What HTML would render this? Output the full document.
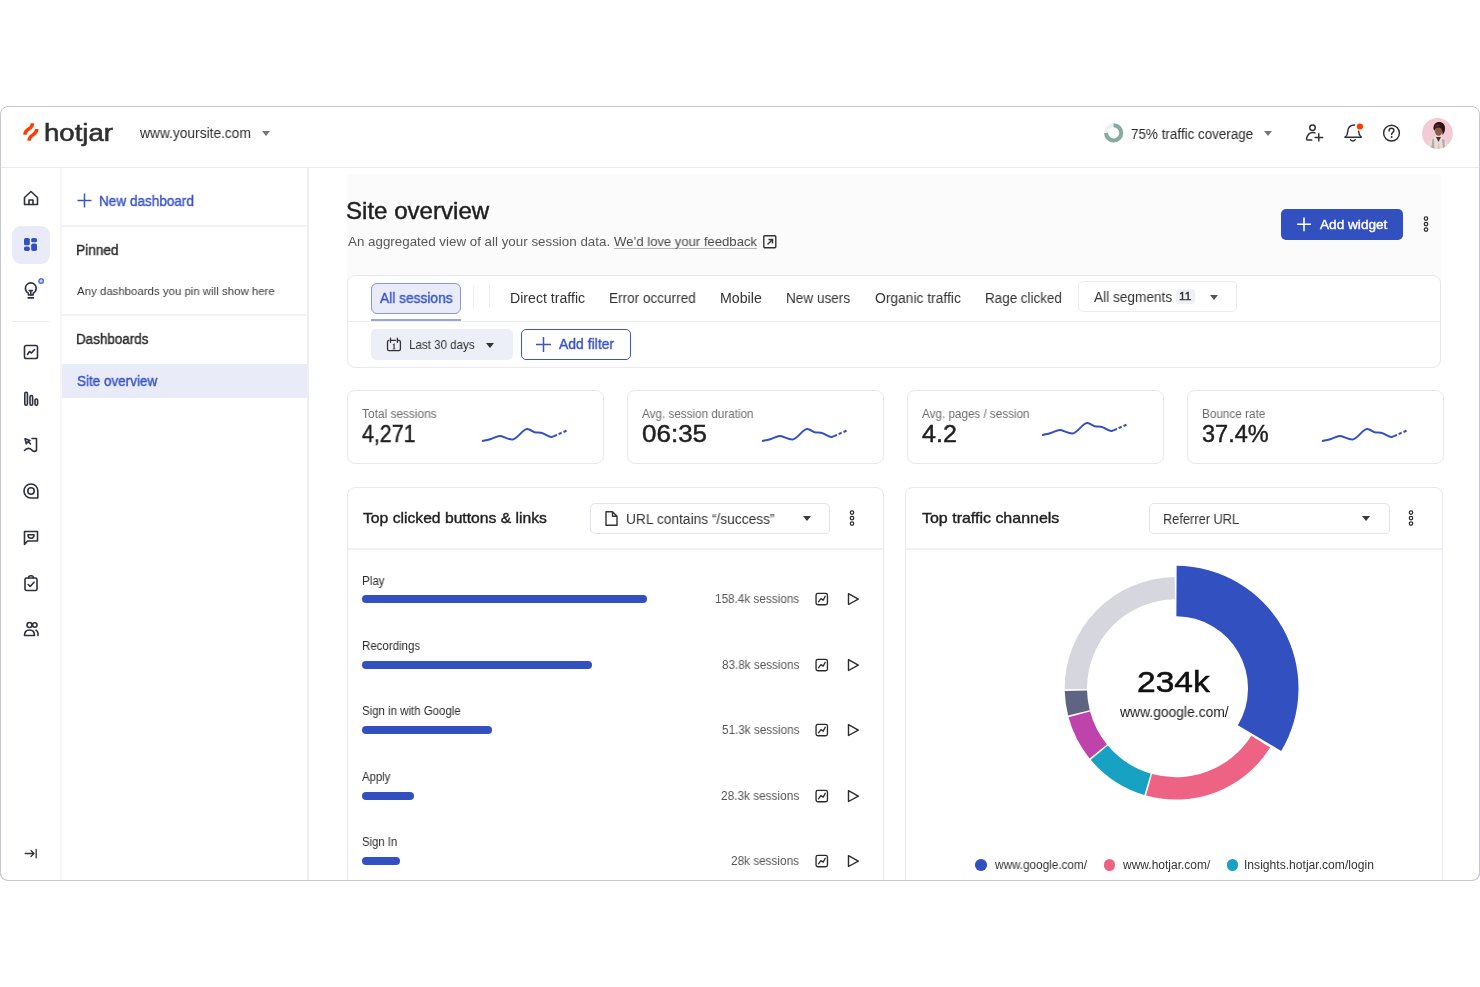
<!DOCTYPE html>
<html><head><meta charset="utf-8"><style>
html,body{margin:0;padding:0;background:#fff;width:1480px;height:987px;overflow:hidden;position:relative;font-family:"Liberation Sans",sans-serif}
.t{position:absolute;white-space:nowrap;line-height:1;will-change:transform}
.frame{position:absolute;left:0;top:106px;width:1478px;height:773px;border:1px solid #c6c8d2;border-radius:8px;background:#fff}
.caret{position:absolute;width:0;height:0;border-left:4.5px solid transparent;border-right:4.5px solid transparent;border-top:5.5px solid #777}
</style></head><body>
<div class="frame"></div><div style="position:absolute;left:1px;top:167px;width:1478px;height:1px;background:#e9e9ee"></div><div style="position:absolute;left:60px;top:168px;width:2px;height:712px;background:#f6f6f9"></div><div style="position:absolute;left:307px;top:168px;width:2px;height:712px;background:#efeff3"></div><svg style="position:absolute;left:18px;top:118px" width="26" height="28" viewBox="0 0 26 28">
<path d="M14.5 5.3 C14.5 12.3 6.9 9.8 6.9 16.8" stroke="#ff3c00" stroke-width="3.4" fill="none"/>
<path d="M18.8 11.1 C18.8 18.1 11 15.6 11 22.8" stroke="#ff3c00" stroke-width="3.4" fill="none"/>
</svg><div class="t" style="left:43.97px;top:121.40px;font-size:24.20px;color:#2f2f2f;letter-spacing:0.000px;transform:scaleX(1.1413);transform-origin:0 0;-webkit-text-stroke:0.55px #2f2f2f;">hotjar</div>
<div class="t" style="left:139.73px;top:126.04px;font-size:14.00px;color:#2b2b2b;letter-spacing:0.000px;transform:scaleX(0.9828);transform-origin:0 0;">www.yoursite.com</div>
<div class="caret" style="left:262px;top:131px"></div><svg style="position:absolute;left:1103px;top:123px" width="22" height="22" viewBox="0 0 22 22">
<circle cx="10.65" cy="9.9" r="7.6" stroke="#eeeff4" stroke-width="4" fill="none"/>
<path d="M10.65 2.3 A7.6 7.6 0 1 1 3.05 9.9" stroke="#86ada0" stroke-width="4" fill="none"/>
</svg><div class="t" style="left:1130.73px;top:126.54px;font-size:14.00px;color:#2b2b2b;letter-spacing:0.000px;transform:scaleX(0.9598);transform-origin:0 0;">75% traffic coverage</div>
<div class="caret" style="left:1264px;top:131px"></div><svg style="position:absolute;left:1290px;top:110px" width="120" height="45" viewBox="0 0 120 45">
<g stroke="#2f2f2f" stroke-width="1.45" fill="none" stroke-linecap="round" stroke-linejoin="round">
<circle cx="22.5" cy="17.8" r="2.75"/>
<path d="M21.8 30 H17.6 C16.7 30 16.3 29.3 16.6 28.2 C17.5 25 19.6 22.4 22.7 22.4 C23.6 22.4 24.4 22.6 25 22.9"/>
<path d="M28.8 23.6 V31.1 M25.1 27.4 H32.7"/>
<path d="M54.9 27.2 H71.3"/>
<path d="M55.4 27 C57.2 25.6 57.6 23.8 57.8 21.2 C58.1 17.2 60.6 15 64.6 15"/>
<path d="M68.6 21.2 C68.8 24 69.3 25.6 71 27"/>
<path d="M60.6 29.7 C61.3 31.4 64.4 31.4 65.1 29.7"/>
<circle cx="101.5" cy="23.1" r="7.9"/>
<path d="M99.1 20.9 C99.1 19.1 100.2 18.3 101.5 18.3 C102.9 18.3 103.9 19.2 103.9 20.5 C103.9 22.3 101.6 22.5 101.6 24.5"/>
</g>
<circle cx="101.6" cy="27.1" r="1" fill="#2f2f2f"/>
<circle cx="69.9" cy="16.5" r="3.1" fill="#ff3c00"/>
</svg><svg style="position:absolute;left:1422px;top:117.7px" width="31" height="31" viewBox="0 0 31 31">
<defs><clipPath id="av"><circle cx="15.4" cy="15.4" r="15.4"/></clipPath></defs>
<g clip-path="url(#av)">
<rect width="31" height="31" fill="#f4cad5"/>
<path d="M5 31 C6 22 9 19.5 13 19 L19 19 C23 19.5 25 22 26.5 31 Z" fill="#e6ddd8"/>
<path d="M9 31 L10.5 21 L12 20.5 L12.5 31 Z M21 31 L20 21 L22.5 21.5 L23 31Z" fill="#b9aaa6"/>
<path d="M14 19 L16.5 24 L19 19 Z" fill="#4a3028"/>
<path d="M15.5 31 L16.5 23 L18 31 Z" fill="#f2b8c2"/>
<ellipse cx="16.6" cy="13.2" rx="3.6" ry="4.6" fill="#8b5b46"/>
<path d="M11.5 11 C11 6.5 14 4 17 4 C20.5 4 23.5 6.5 23 11 C23 14 21.5 16 20.5 17 C20.5 13 20 10 17 9.5 C14.5 9.3 13 10.5 12.5 13 Z" fill="#2a1416"/>
<path d="M13 8.5 C14 6.5 17 6 19.5 7.3 C18 7.5 15 8 13 9.5 Z" fill="#7a1f35"/>
</g></svg><svg style="position:absolute;left:22px;top:189px" width="18" height="18" viewBox="0 0 18 18"><path d="M2.5 8.5 L9 2.5 L15.5 8.5 V15.5 H2.5 Z" stroke="#2e3240" stroke-width="1.6" fill="none" stroke-linecap="round" stroke-linejoin="round"/><path d="M7 15.5 V11 H11 V15.5" stroke="#2e3240" stroke-width="1.6" fill="none" stroke-linecap="round" stroke-linejoin="round"/></svg>
<div style="position:absolute;left:12px;top:226px;width:38px;height:38px;border-radius:9px;background:#e9ecf8"></div><svg style="position:absolute;left:23px;top:237px" width="16" height="16" viewBox="0 0 16 16"><rect x="1" y="1" width="5.8" height="7.3" rx="1.6" fill="#3350c0"/><rect x="1" y="9.6" width="5.8" height="4.3" rx="1.6" fill="#3350c0"/><rect x="8.2" y="1" width="5.8" height="4.3" rx="1.6" fill="#3350c0"/><rect x="8.2" y="6.6" width="5.8" height="7.3" rx="1.6" fill="#3350c0"/></svg>
<svg style="position:absolute;left:22px;top:276px" width="26" height="26" viewBox="0 0 26 26"><path d="M6.4 19 V17.2 C4.6 16.2 3.4 14.4 3.4 12.3 C3.4 9.3 5.8 6.9 8.8 6.9 C11.8 6.9 14.2 9.3 14.2 12.3 C14.2 14.4 13 16.2 11.2 17.2 V19 Z" stroke="#2e3240" stroke-width="1.6" fill="none" stroke-linecap="round" stroke-linejoin="round"/><path d="M7.2 14.6 H10.4 M8.8 14.6 V19 M6.2 21.9 H11.4" stroke="#2e3240" stroke-width="1.6" fill="none" stroke-linecap="round" stroke-linejoin="round"/><circle cx="19.1" cy="5" r="2.3" stroke="#4a66d4" stroke-width="1.3" fill="#c3cdf0"/></svg>
<div style="position:absolute;left:12px;top:321px;width:38px;height:1px;background:#ececf1"></div><svg style="position:absolute;left:22px;top:343px" width="18" height="18" viewBox="0 0 18 18"><rect x="2.5" y="2.5" width="13" height="13" rx="1.8" stroke="#2e3240" stroke-width="1.6" fill="none" stroke-linecap="round" stroke-linejoin="round"/><path d="M5.5 11.5 L7.5 8.5 L9.5 10 L12.5 6.5" stroke="#2e3240" stroke-width="1.6" fill="none" stroke-linecap="round" stroke-linejoin="round"/></svg>
<svg style="position:absolute;left:22px;top:390px" width="18" height="18" viewBox="0 0 18 18"><rect x="2.8" y="2.3" width="2.6" height="13" rx="1.2" stroke="#2e3240" stroke-width="1.6" fill="none" stroke-linecap="round" stroke-linejoin="round"/><rect x="8" y="5.5" width="2.6" height="9.8" rx="1.2" stroke="#2e3240" stroke-width="1.6" fill="none" stroke-linecap="round" stroke-linejoin="round"/><rect x="13" y="9" width="2.6" height="6.3" rx="1.2" stroke="#2e3240" stroke-width="1.6" fill="none" stroke-linecap="round" stroke-linejoin="round"/></svg>
<svg style="position:absolute;left:22px;top:436px" width="18" height="18" viewBox="0 0 18 18"><path d="M3 2.8 L8 4.5 L6.2 5.6 L8.5 8 M3 2.8 L4.3 7.8 L5.4 6" stroke="#2e3240" stroke-width="1.6" fill="none" stroke-linecap="round" stroke-linejoin="round"/><path d="M10 2.5 H14.5 V13.5 C14.5 16 11 15.8 9.5 13.8 C8 12 5 11.5 2.5 14.5" stroke="#2e3240" stroke-width="1.6" fill="none" stroke-linecap="round" stroke-linejoin="round"/></svg>
<svg style="position:absolute;left:22px;top:482px" width="18" height="18" viewBox="0 0 18 18"><path d="M9 2 C5 2 2 5 2 9 C2 13 5 16 9 16 H15.8 V9 C15.8 5 13 2 9 2 Z" stroke="#2e3240" stroke-width="1.6" fill="none" stroke-linecap="round" stroke-linejoin="round"/><circle cx="9" cy="9" r="3.2" stroke="#2e3240" stroke-width="1.6" fill="none" stroke-linecap="round" stroke-linejoin="round"/></svg>
<svg style="position:absolute;left:22px;top:528px" width="18" height="18" viewBox="0 0 18 18"><path d="M2.5 16.5 V3.5 H15.5 V13 H5.5 Z" stroke="#2e3240" stroke-width="1.6" fill="none" stroke-linecap="round" stroke-linejoin="round"/><path d="M6 6.8 H12 C12 9.5 10.5 10.3 9 10.3 C7.5 10.3 6 9.5 6 6.8 Z" stroke="#2e3240" stroke-width="1.6" fill="none" stroke-linecap="round" stroke-linejoin="round"/></svg>
<svg style="position:absolute;left:22px;top:574px" width="18" height="18" viewBox="0 0 18 18"><rect x="3" y="4" width="12" height="12.5" rx="1.5" stroke="#2e3240" stroke-width="1.6" fill="none" stroke-linecap="round" stroke-linejoin="round"/><path d="M6.5 4 C6.5 2.5 7.5 1.8 9 1.8 C10.5 1.8 11.5 2.5 11.5 4" stroke="#2e3240" stroke-width="1.6" fill="none" stroke-linecap="round" stroke-linejoin="round"/><path d="M6.2 10.5 L8.2 12.5 L12 8.2" stroke="#2e3240" stroke-width="1.6" fill="none" stroke-linecap="round" stroke-linejoin="round"/></svg>
<svg style="position:absolute;left:22px;top:620px" width="18" height="18" viewBox="0 0 18 18"><circle cx="7.5" cy="5" r="2.5" stroke="#2e3240" stroke-width="1.6" fill="none" stroke-linecap="round" stroke-linejoin="round"/><circle cx="12.8" cy="5" r="2.2" stroke="#2e3240" stroke-width="1.6" fill="none" stroke-linecap="round" stroke-linejoin="round"/><path d="M2.5 15.5 C2.5 11.5 5 10 7.5 10 C10 10 12.5 11.5 12.5 15.5 Z" stroke="#2e3240" stroke-width="1.6" fill="none" stroke-linecap="round" stroke-linejoin="round"/><path d="M14 10.3 C15.5 11 16.3 12.5 16 15.5" stroke="#2e3240" stroke-width="1.6" fill="none" stroke-linecap="round" stroke-linejoin="round"/></svg>
<svg style="position:absolute;left:22px;top:845px" width="18" height="18" viewBox="0 0 18 18"><path d="M3.2 8.5 H12 M9 5.5 L12 8.5 L9 11.5 M14.2 4.5 V12.8" stroke="#333" stroke-width="1.3" fill="none" stroke-linecap="round" stroke-linejoin="round"/></svg>
<svg style="position:absolute;left:76px;top:192px" width="17" height="17" viewBox="0 0 17 17"><path d="M8.5 1.5 V15.5 M1.5 8.5 H15.5" stroke="#3a55c8" stroke-width="1.5"/></svg>
<div class="t" style="left:99.28px;top:193.84px;font-size:14.00px;color:#3a55c8;letter-spacing:0.000px;transform:scaleX(0.9687);transform-origin:0 0;-webkit-text-stroke:0.4px #3a55c8;">New dashboard</div>
<div style="position:absolute;left:62px;top:225px;width:245px;height:2px;background:#f3f3f6"></div><div class="t" style="left:76.27px;top:243.34px;font-size:14.00px;color:#2b2b2b;letter-spacing:0.000px;transform:scaleX(0.9773);transform-origin:0 0;-webkit-text-stroke:0.4px #2b2b2b;">Pinned</div>
<div class="t" style="left:77.37px;top:284.87px;font-size:11.60px;color:#3b3b3b;letter-spacing:0.000px;transform:scaleX(0.9864);transform-origin:0 0;">Any dashboards you pin will show here</div>
<div style="position:absolute;left:62px;top:314px;width:245px;height:2px;background:#f3f3f6"></div><div class="t" style="left:76.29px;top:331.74px;font-size:14.00px;color:#2b2b2b;letter-spacing:0.000px;transform:scaleX(0.9587);transform-origin:0 0;-webkit-text-stroke:0.4px #2b2b2b;">Dashboards</div>
<div style="position:absolute;left:62px;top:364px;width:245px;height:34px;background:#e9ecf8"></div><div class="t" style="left:76.59px;top:374.24px;font-size:14.00px;color:#3652c6;letter-spacing:0.000px;transform:scaleX(0.9629);transform-origin:0 0;-webkit-text-stroke:0.4px #3652c6;">Site overview</div>
<div style="position:absolute;left:347px;top:174px;width:1094px;height:130px;background:#fbfbfc"></div><div class="t" style="left:346.42px;top:198.74px;font-size:23.80px;color:#1f1f1f;letter-spacing:0.000px;transform:scaleX(1.0118);transform-origin:0 0;-webkit-text-stroke:0.45px #1f1f1f;">Site overview</div>
<div class="t" style="left:347.57px;top:235.42px;font-size:13.20px;color:#575757;letter-spacing:0.000px;transform:scaleX(1.0128);transform-origin:0 0;">An aggregated view of all your session data.</div>
<div class="t" style="left:614.13px;top:235.42px;font-size:13.20px;color:#4a4a4a;letter-spacing:0.000px;transform:scaleX(0.9914);transform-origin:0 0;text-decoration:underline;text-decoration-color:#b5b5b5;text-underline-offset:2px;text-decoration-thickness:1px;">We’d love your feedback</div>
<svg style="position:absolute;left:762px;top:234px" width="16" height="16" viewBox="0 0 16 16"><rect x="1.8" y="1.8" width="12" height="12" rx="1" stroke="#333" stroke-width="1.4" fill="none"/><path d="M5.5 10.5 L10.5 5.5 M6.5 5.5 H10.5 V9.5" stroke="#333" stroke-width="1.4" fill="none"/></svg>
<div style="position:absolute;left:1281px;top:209px;width:122px;height:31px;border-radius:5px;background:#3350c0"></div><svg style="position:absolute;left:1296px;top:216px" width="16" height="16" viewBox="0 0 16 16"><path d="M8 1.5 V15.2 M1.2 8.3 H14.9" stroke="#fff" stroke-width="1.6"/></svg>
<div class="t" style="left:1319.57px;top:217.78px;font-size:13.60px;color:#ffffff;letter-spacing:0.000px;transform:scaleX(1.0022);transform-origin:0 0;-webkit-text-stroke:0.4px #ffffff;">Add widget</div>
<svg style="position:absolute;left:1421px;top:215px" width="10" height="18" viewBox="0 0 10 18"><circle cx="5" cy="3.6" r="1.75" stroke="#2b2b2b" stroke-width="1.2" fill="#fff"/><circle cx="5" cy="9.1" r="1.75" stroke="#2b2b2b" stroke-width="1.2" fill="#fff"/><circle cx="5" cy="14.6" r="1.75" stroke="#2b2b2b" stroke-width="1.2" fill="#fff"/></svg>
<div style="position:absolute;left:347px;top:275px;width:1092px;height:91px;border:1px solid #e8e9ee;border-radius:8px;background:#fff"></div><div style="position:absolute;left:348px;top:321px;width:1092px;height:1px;background:#ececf1"></div><div style="position:absolute;left:371px;top:282.5px;width:88px;height:29px;border:1px solid #8797dc;border-radius:6px;background:#e9ecf8"></div><div class="t" style="left:379.97px;top:290.94px;font-size:14.00px;color:#3a55c8;letter-spacing:0.000px;transform:scaleX(0.9810);transform-origin:0 0;-webkit-text-stroke:0.4px #3a55c8;">All sessions</div>
<div style="position:absolute;left:371px;top:319px;width:90px;height:2px;background:#97a5e2"></div><div style="position:absolute;left:473px;top:285px;width:1px;height:23px;background:#f0f0f4"></div><div style="position:absolute;left:489px;top:285px;width:1px;height:23px;background:#ececf1"></div><div class="t" style="left:509.53px;top:290.94px;font-size:14.00px;color:#333;letter-spacing:0.000px;transform:scaleX(1.0100);transform-origin:0 0;">Direct traffic</div>
<div class="t" style="left:609.18px;top:290.94px;font-size:14.00px;color:#333;letter-spacing:0.000px;transform:scaleX(0.9688);transform-origin:0 0;">Error occurred</div>
<div class="t" style="left:720.23px;top:290.94px;font-size:14.00px;color:#333;letter-spacing:0.000px;transform:scaleX(1.0132);transform-origin:0 0;">Mobile</div>
<div class="t" style="left:786.48px;top:290.94px;font-size:14.00px;color:#333;letter-spacing:0.000px;transform:scaleX(0.9674);transform-origin:0 0;">New users</div>
<div class="t" style="left:875.04px;top:290.94px;font-size:14.00px;color:#333;letter-spacing:0.000px;transform:scaleX(0.9877);transform-origin:0 0;">Organic traffic</div>
<div class="t" style="left:985.39px;top:290.94px;font-size:14.00px;color:#333;letter-spacing:0.000px;transform:scaleX(0.9601);transform-origin:0 0;">Rage clicked</div>
<div style="position:absolute;left:1078px;top:281px;width:157px;height:29px;border:1px solid #ececf1;border-radius:5px;background:#fff"></div><div class="t" style="left:1093.77px;top:290.04px;font-size:14.00px;color:#333;letter-spacing:0.000px;transform:scaleX(0.9746);transform-origin:0 0;">All segments</div>
<div style="position:absolute;left:1176px;top:289px;width:19px;height:15px;border-radius:3px;background:#eef0f6"></div><div class="t" style="left:1179.31px;top:290.56px;font-size:11.50px;color:#333;letter-spacing:0.000px;transform:scaleX(1.0264);transform-origin:0 0;-webkit-text-stroke:0.4px #333;">11</div>
<div class="caret" style="left:1209.5px;top:294.5px;border-top-color:#555"></div><div style="position:absolute;left:371px;top:329px;width:142px;height:31px;border-radius:5px;background:#eceef8"></div><svg style="position:absolute;left:385px;top:336px" width="17" height="17" viewBox="0 0 17 17"><g stroke="#333" stroke-width="1.3" fill="none" stroke-linecap="round" stroke-linejoin="round"><path d="M3.9 4.4 C3 4.4 2.5 5 2.5 6 V13.1 C2.5 14.1 3 14.7 4 14.7 H13.9 C14.9 14.7 15.4 14.1 15.4 13.1 V6 C15.4 5 14.9 4.4 14 4.4 H12.4"/><path d="M5.5 2.2 V6.4 M12.4 2.2 V6.4 M5.5 4.4 H10.5"/></g><path d="M8.1 9.2 L9.1 8.3 V12.8" stroke="#444" stroke-width="1.2" fill="none"/><path d="M7.7 12.9 H10.4" stroke="#555" stroke-width="1"/></svg>
<div class="t" style="left:409.05px;top:338.29px;font-size:13.00px;color:#333;letter-spacing:0.000px;transform:scaleX(0.8894);transform-origin:0 0;">Last 30 days</div>
<div class="caret" style="left:486px;top:342.5px;border-top-color:#333"></div><div style="position:absolute;left:521px;top:329px;width:107.5px;height:29px;border:1px solid #3a55c8;border-radius:5px;background:#fff"></div><svg style="position:absolute;left:535px;top:336px" width="17" height="17" viewBox="0 0 17 17"><path d="M8.5 1 V16 M1 8.5 H16" stroke="#3a55c8" stroke-width="1.5"/></svg>
<div class="t" style="left:559.47px;top:337.14px;font-size:14.00px;color:#3a55c8;letter-spacing:0.000px;transform:scaleX(0.9966);transform-origin:0 0;-webkit-text-stroke:0.4px #3a55c8;">Add filter</div>
<div style="position:absolute;left:347px;top:390px;width:255px;height:72px;border:1px solid #e8e9ee;border-radius:8px;background:#fff"></div><div class="t" style="left:362.23px;top:407.74px;font-size:12.00px;color:#6b6b6b;letter-spacing:0.000px;transform:scaleX(0.9910);transform-origin:0 0;">Total sessions</div>
<div class="t" style="left:362.12px;top:422.80px;font-size:23.50px;color:#1f1f1f;letter-spacing:0.000px;transform:scaleX(0.9097);transform-origin:0 0;-webkit-text-stroke:0.45px #1f1f1f;">4,271</div>
<svg style="position:absolute;left:481.8px;top:428px" width="86" height="15" viewBox="0 0 86 15"><path d="M0.5 12.9 C4 12.2 6.5 11.8 9 11 C12.5 9.8 15.5 7.6 18.4 8 C22 8.5 26.5 11.8 30.6 11.5 C35 11.2 40.5 1.5 45 1.1 C48.5 0.8 51 4.5 54.4 4.5 C57 4.5 59 4.3 61 5.3 C64 6.8 67 9.4 69.7 8.9 C71.2 8.6 72.8 7.8 74.3 7.1" stroke="#3350c0" stroke-width="2" fill="none" stroke-linecap="round"/><path d="M76.6 6.1 L79.6 4.8 M81.5 4.0 L84.5 2.8" stroke="#3350c0" stroke-width="2.1" fill="none" stroke-linecap="butt"/></svg>
<div style="position:absolute;left:627px;top:390px;width:255px;height:72px;border:1px solid #e8e9ee;border-radius:8px;background:#fff"></div><div class="t" style="left:642.47px;top:407.74px;font-size:12.00px;color:#6b6b6b;letter-spacing:0.000px;transform:scaleX(0.9742);transform-origin:0 0;">Avg. session duration</div>
<div class="t" style="left:641.56px;top:422.80px;font-size:23.50px;color:#1f1f1f;letter-spacing:0.000px;transform:scaleX(1.1066);transform-origin:0 0;-webkit-text-stroke:0.45px #1f1f1f;">06:35</div>
<svg style="position:absolute;left:761.8px;top:428px" width="86" height="15" viewBox="0 0 86 15"><path d="M0.5 12.9 C4 12.2 6.5 11.8 9 11 C12.5 9.8 15.5 7.6 18.4 8 C22 8.5 26.5 11.8 30.6 11.5 C35 11.2 40.5 1.5 45 1.1 C48.5 0.8 51 4.5 54.4 4.5 C57 4.5 59 4.3 61 5.3 C64 6.8 67 9.4 69.7 8.9 C71.2 8.6 72.8 7.8 74.3 7.1" stroke="#3350c0" stroke-width="2" fill="none" stroke-linecap="round"/><path d="M76.6 6.1 L79.6 4.8 M81.5 4.0 L84.5 2.8" stroke="#3350c0" stroke-width="2.1" fill="none" stroke-linecap="butt"/></svg>
<div style="position:absolute;left:907px;top:390px;width:255px;height:72px;border:1px solid #e8e9ee;border-radius:8px;background:#fff"></div><div class="t" style="left:922.47px;top:407.74px;font-size:12.00px;color:#6b6b6b;letter-spacing:0.000px;transform:scaleX(0.9735);transform-origin:0 0;">Avg. pages / session</div>
<div class="t" style="left:922.04px;top:422.80px;font-size:23.50px;color:#1f1f1f;letter-spacing:0.000px;transform:scaleX(1.0658);transform-origin:0 0;-webkit-text-stroke:0.45px #1f1f1f;">4.2</div>
<svg style="position:absolute;left:1041.8px;top:422px" width="86" height="15" viewBox="0 0 86 15"><path d="M0.5 12.9 C4 12.2 6.5 11.8 9 11 C12.5 9.8 15.5 7.6 18.4 8 C22 8.5 26.5 11.8 30.6 11.5 C35 11.2 40.5 1.5 45 1.1 C48.5 0.8 51 4.5 54.4 4.5 C57 4.5 59 4.3 61 5.3 C64 6.8 67 9.4 69.7 8.9 C71.2 8.6 72.8 7.8 74.3 7.1" stroke="#3350c0" stroke-width="2" fill="none" stroke-linecap="round"/><path d="M76.6 6.1 L79.6 4.8 M81.5 4.0 L84.5 2.8" stroke="#3350c0" stroke-width="2.1" fill="none" stroke-linecap="butt"/></svg>
<div style="position:absolute;left:1187px;top:390px;width:255px;height:72px;border:1px solid #e8e9ee;border-radius:8px;background:#fff"></div><div class="t" style="left:1201.53px;top:407.74px;font-size:12.00px;color:#6b6b6b;letter-spacing:0.000px;transform:scaleX(0.9777);transform-origin:0 0;">Bounce rate</div>
<div class="t" style="left:1201.72px;top:422.80px;font-size:23.50px;color:#1f1f1f;letter-spacing:0.000px;transform:scaleX(1.0003);transform-origin:0 0;-webkit-text-stroke:0.45px #1f1f1f;">37.4%</div>
<svg style="position:absolute;left:1321.8px;top:428px" width="86" height="15" viewBox="0 0 86 15"><path d="M0.5 12.9 C4 12.2 6.5 11.8 9 11 C12.5 9.8 15.5 7.6 18.4 8 C22 8.5 26.5 11.8 30.6 11.5 C35 11.2 40.5 1.5 45 1.1 C48.5 0.8 51 4.5 54.4 4.5 C57 4.5 59 4.3 61 5.3 C64 6.8 67 9.4 69.7 8.9 C71.2 8.6 72.8 7.8 74.3 7.1" stroke="#3350c0" stroke-width="2" fill="none" stroke-linecap="round"/><path d="M76.6 6.1 L79.6 4.8 M81.5 4.0 L84.5 2.8" stroke="#3350c0" stroke-width="2.1" fill="none" stroke-linecap="butt"/></svg>
<div style="position:absolute;left:346.5px;top:487px;width:535px;height:420px;border:1px solid #e8e9ee;border-radius:8px;background:#fff"></div><div style="position:absolute;left:347px;top:548px;width:536px;height:2px;background:#f0f1f4"></div><div class="t" style="left:362.75px;top:510.00px;font-size:15.00px;color:#1f1f1f;letter-spacing:0.000px;transform:scaleX(1.0454);transform-origin:0 0;-webkit-text-stroke:0.4px #1f1f1f;">Top clicked buttons &amp; links</div>
<div style="position:absolute;left:589.5px;top:503px;width:238px;height:29px;border:1px solid #e3e3ea;border-radius:5px;background:#fff"></div><svg style="position:absolute;left:603px;top:510px" width="17" height="17" viewBox="0 0 17 17"><path d="M3 1.8 H9.5 L14 6.3 V15.2 H3 Z M9.5 1.8 V6.3 H14" stroke="#333" stroke-width="1.4" fill="none" stroke-linejoin="round"/></svg>
<div class="t" style="left:626.43px;top:511.64px;font-size:14.00px;color:#333;letter-spacing:0.000px;transform:scaleX(0.9825);transform-origin:0 0;">URL contains “/success”</div>
<div class="caret" style="left:802.5px;top:515.8px;border-top-color:#3a3a3a"></div><svg style="position:absolute;left:847px;top:509px" width="10" height="18" viewBox="0 0 10 18"><circle cx="5" cy="3.6" r="1.75" stroke="#2b2b2b" stroke-width="1.2" fill="#fff"/><circle cx="5" cy="9.1" r="1.75" stroke="#2b2b2b" stroke-width="1.2" fill="#fff"/><circle cx="5" cy="14.6" r="1.75" stroke="#2b2b2b" stroke-width="1.2" fill="#fff"/></svg>
<div class="t" style="left:361.54px;top:574.64px;font-size:12.00px;color:#2b2b2b;letter-spacing:0.000px;transform:scaleX(0.9677);transform-origin:0 0;">Play</div>
<div style="position:absolute;left:362px;top:595.3px;width:284.5px;height:8px;border-radius:4px;background:#3350c0"></div><div class="t" style="left:714.82px;top:593.34px;font-size:12.00px;color:#555;letter-spacing:0.000px;transform:scaleX(0.9785);transform-origin:0 0;">158.4k sessions</div>
<svg style="position:absolute;left:813px;top:591.3px" width="17" height="17" viewBox="0 0 17 17"><rect x="3.05" y="2.35" width="11.4" height="11.4" rx="1.8" stroke="#2b2b2b" stroke-width="1.35" fill="none"/><path d="M5.5 10.8 L7.9 7.6 L10.2 9.1 L12.2 5.3" stroke="#2b2b2b" stroke-width="1.35" fill="none" stroke-linecap="round" stroke-linejoin="round"/></svg>
<svg style="position:absolute;left:845px;top:591.3px" width="17" height="17" viewBox="0 0 17 17"><path d="M3.5 2.6 L13.3 8.05 L3.5 13.5 Z" stroke="#2b2b2b" stroke-width="1.4" fill="none" stroke-linejoin="round"/></svg>
<div class="t" style="left:361.55px;top:640.04px;font-size:12.00px;color:#2b2b2b;letter-spacing:0.000px;transform:scaleX(0.9582);transform-origin:0 0;">Recordings</div>
<div style="position:absolute;left:362px;top:660.7px;width:229.6px;height:8px;border-radius:4px;background:#3350c0"></div><div class="t" style="left:721.60px;top:658.74px;font-size:12.00px;color:#555;letter-spacing:0.000px;transform:scaleX(0.9751);transform-origin:0 0;">83.8k sessions</div>
<svg style="position:absolute;left:813px;top:656.6999999999999px" width="17" height="17" viewBox="0 0 17 17"><rect x="3.05" y="2.35" width="11.4" height="11.4" rx="1.8" stroke="#2b2b2b" stroke-width="1.35" fill="none"/><path d="M5.5 10.8 L7.9 7.6 L10.2 9.1 L12.2 5.3" stroke="#2b2b2b" stroke-width="1.35" fill="none" stroke-linecap="round" stroke-linejoin="round"/></svg>
<svg style="position:absolute;left:845px;top:656.6999999999999px" width="17" height="17" viewBox="0 0 17 17"><path d="M3.5 2.6 L13.3 8.05 L3.5 13.5 Z" stroke="#2b2b2b" stroke-width="1.4" fill="none" stroke-linejoin="round"/></svg>
<div class="t" style="left:361.98px;top:705.44px;font-size:12.00px;color:#2b2b2b;letter-spacing:0.000px;transform:scaleX(0.9538);transform-origin:0 0;">Sign in with Google</div>
<div style="position:absolute;left:362px;top:726.1px;width:130.1px;height:8px;border-radius:4px;background:#3350c0"></div><div class="t" style="left:721.53px;top:724.14px;font-size:12.00px;color:#555;letter-spacing:0.000px;transform:scaleX(0.9760);transform-origin:0 0;">51.3k sessions</div>
<svg style="position:absolute;left:813px;top:722.0999999999999px" width="17" height="17" viewBox="0 0 17 17"><rect x="3.05" y="2.35" width="11.4" height="11.4" rx="1.8" stroke="#2b2b2b" stroke-width="1.35" fill="none"/><path d="M5.5 10.8 L7.9 7.6 L10.2 9.1 L12.2 5.3" stroke="#2b2b2b" stroke-width="1.35" fill="none" stroke-linecap="round" stroke-linejoin="round"/></svg>
<svg style="position:absolute;left:845px;top:722.0999999999999px" width="17" height="17" viewBox="0 0 17 17"><path d="M3.5 2.6 L13.3 8.05 L3.5 13.5 Z" stroke="#2b2b2b" stroke-width="1.4" fill="none" stroke-linejoin="round"/></svg>
<div class="t" style="left:362.47px;top:770.84px;font-size:12.00px;color:#2b2b2b;letter-spacing:0.000px;transform:scaleX(0.9443);transform-origin:0 0;">Apply</div>
<div style="position:absolute;left:362px;top:791.5px;width:51.8px;height:8px;border-radius:4px;background:#3350c0"></div><div class="t" style="left:720.81px;top:789.54px;font-size:12.00px;color:#555;letter-spacing:0.000px;transform:scaleX(0.9852);transform-origin:0 0;">28.3k sessions</div>
<svg style="position:absolute;left:813px;top:787.5px" width="17" height="17" viewBox="0 0 17 17"><rect x="3.05" y="2.35" width="11.4" height="11.4" rx="1.8" stroke="#2b2b2b" stroke-width="1.35" fill="none"/><path d="M5.5 10.8 L7.9 7.6 L10.2 9.1 L12.2 5.3" stroke="#2b2b2b" stroke-width="1.35" fill="none" stroke-linecap="round" stroke-linejoin="round"/></svg>
<svg style="position:absolute;left:845px;top:787.5px" width="17" height="17" viewBox="0 0 17 17"><path d="M3.5 2.6 L13.3 8.05 L3.5 13.5 Z" stroke="#2b2b2b" stroke-width="1.4" fill="none" stroke-linejoin="round"/></svg>
<div class="t" style="left:361.99px;top:836.24px;font-size:12.00px;color:#2b2b2b;letter-spacing:0.000px;transform:scaleX(0.9429);transform-origin:0 0;">Sign In</div>
<div style="position:absolute;left:362px;top:856.9px;width:37.8px;height:8px;border-radius:4px;background:#3350c0"></div><div class="t" style="left:731.01px;top:854.94px;font-size:12.00px;color:#555;letter-spacing:0.000px;transform:scaleX(0.9804);transform-origin:0 0;">28k sessions</div>
<svg style="position:absolute;left:813px;top:852.9px" width="17" height="17" viewBox="0 0 17 17"><rect x="3.05" y="2.35" width="11.4" height="11.4" rx="1.8" stroke="#2b2b2b" stroke-width="1.35" fill="none"/><path d="M5.5 10.8 L7.9 7.6 L10.2 9.1 L12.2 5.3" stroke="#2b2b2b" stroke-width="1.35" fill="none" stroke-linecap="round" stroke-linejoin="round"/></svg>
<svg style="position:absolute;left:845px;top:852.9px" width="17" height="17" viewBox="0 0 17 17"><path d="M3.5 2.6 L13.3 8.05 L3.5 13.5 Z" stroke="#2b2b2b" stroke-width="1.4" fill="none" stroke-linejoin="round"/></svg>
<div style="position:absolute;left:905px;top:487px;width:536px;height:420px;border:1px solid #e8e9ee;border-radius:8px;background:#fff"></div><div style="position:absolute;left:906px;top:548px;width:536px;height:2px;background:#f0f1f4"></div><div class="t" style="left:921.54px;top:510.00px;font-size:15.00px;color:#1f1f1f;letter-spacing:0.000px;transform:scaleX(1.0648);transform-origin:0 0;-webkit-text-stroke:0.4px #1f1f1f;">Top traffic channels</div>
<div style="position:absolute;left:1148.5px;top:503px;width:239px;height:29px;border:1px solid #e3e3ea;border-radius:5px;background:#fff"></div><div class="t" style="left:1163.24px;top:511.64px;font-size:14.00px;color:#333;letter-spacing:0.000px;transform:scaleX(0.9140);transform-origin:0 0;">Referrer URL</div>
<div class="caret" style="left:1361.5px;top:515.8px;border-top-color:#3a3a3a"></div><svg style="position:absolute;left:1406px;top:509px" width="10" height="18" viewBox="0 0 10 18"><circle cx="5" cy="3.6" r="1.75" stroke="#2b2b2b" stroke-width="1.2" fill="#fff"/><circle cx="5" cy="9.1" r="1.75" stroke="#2b2b2b" stroke-width="1.2" fill="#fff"/><circle cx="5" cy="14.6" r="1.75" stroke="#2b2b2b" stroke-width="1.2" fill="#fff"/></svg>
<svg style="position:absolute;left:0;top:0" width="1480" height="987"><path d="M1176.64 565.80 A122.50 122.50 0 0 1 1281.22 751.03 L1237.85 725.17 A72.00 72.00 0 0 0 1176.38 616.30 Z" fill="#3350c0"/><path d="M1270.18 747.61 A111.30 111.30 0 0 1 1146.07 795.50 L1152.07 774.02 A89.00 89.00 0 0 0 1251.31 735.73 Z" fill="#ee6383"/><path d="M1144.39 795.02 A111.30 111.30 0 0 1 1090.74 759.84 L1107.82 745.51 A89.00 89.00 0 0 0 1150.72 773.63 Z" fill="#17a2c4"/><path d="M1089.63 758.49 A111.30 111.30 0 0 1 1068.54 717.29 L1090.07 711.48 A89.00 89.00 0 0 0 1106.93 744.43 Z" fill="#be44ac"/><path d="M1068.10 715.60 A111.30 111.30 0 0 1 1064.73 691.02 L1087.03 690.47 A89.00 89.00 0 0 0 1089.72 710.13 Z" fill="#5f6483"/><path d="M1064.70 689.27 A111.30 111.30 0 0 1 1174.64 577.01 L1174.91 599.31 A89.00 89.00 0 0 0 1087.00 689.08 Z" fill="#d5d6de"/></svg><div class="t" style="left:1137.02px;top:666.81px;font-size:29.50px;color:#111;letter-spacing:0.000px;transform:scaleX(1.1366);transform-origin:0 0;-webkit-text-stroke:0.55px #111;">234k</div>
<div class="t" style="left:1120.03px;top:704.94px;font-size:14.00px;color:#222;letter-spacing:0.000px;transform:scaleX(0.9903);transform-origin:0 0;">www.google.com/</div>
<div style="position:absolute;left:975.0px;top:859px;width:11.5px;height:11.5px;border-radius:50%;background:#3350c0"></div><div class="t" style="left:994.53px;top:858.54px;font-size:12.00px;color:#333;letter-spacing:0.000px;transform:scaleX(0.9779);transform-origin:0 0;">www.google.com/</div>
<div style="position:absolute;left:1103.8px;top:859px;width:11.5px;height:11.5px;border-radius:50%;background:#ee6383"></div><div class="t" style="left:1122.53px;top:858.54px;font-size:12.00px;color:#333;letter-spacing:0.000px;transform:scaleX(0.9990);transform-origin:0 0;">www.hotjar.com/</div>
<div style="position:absolute;left:1226.8px;top:859px;width:11.5px;height:11.5px;border-radius:50%;background:#17a2c4"></div><div class="t" style="left:1244.18px;top:858.54px;font-size:12.00px;color:#333;letter-spacing:0.000px;transform:scaleX(1.0089);transform-origin:0 0;">Insights.hotjar.com/login</div>
<div style="position:absolute;left:0;top:880px;width:1480px;height:107px;background:#fff"></div><div style="position:absolute;left:0;top:860px;width:1480px;height:21px;border:1px solid #c6c8d2;border-top:none;border-radius:0 0 8px 8px;box-sizing:border-box;pointer-events:none"></div>
</body></html>
